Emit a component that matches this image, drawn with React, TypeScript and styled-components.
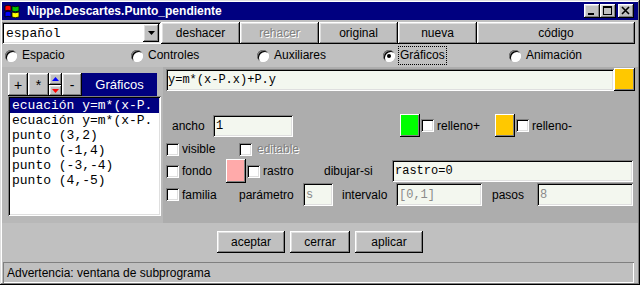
import React from 'react';
import styled, { createGlobalStyle, css } from 'styled-components';

const GlobalStyle = createGlobalStyle`
  html, body { margin: 0; padding: 0; background: #c0c0c0; }
  * { box-sizing: border-box; }
`;

const raised = css`
  box-shadow: inset -1px -1px #000, inset 1px 1px #fff, inset -2px -2px #808080, inset 2px 2px #dfdfdf;
`;
const sunken = css`
  box-shadow: inset 1px 1px #808080, inset -1px -1px #fff, inset 2px 2px #000, inset -2px -2px #dfdfdf;
`;

const Window = styled.div`
  width: 640px;
  height: 285px;
  background: #c0c0c0;
  padding: 2px;
  box-shadow: inset -1px -1px #000, inset 1px 1px #dfdfdf, inset -2px -2px #808080, inset 2px 2px #fff;
  display: flex;
  flex-direction: column;
  font-family: "Liberation Sans", Arial, sans-serif;
  font-size: 12px;
  color: #000;
  overflow: hidden;
`;

const TitleBar = styled.div`
  height: 18px;
  background: #000080;
  display: flex;
  align-items: center;
  padding: 0 4px 0 2px;
  flex: none;
`;

const TitleText = styled.span`
  color: #fff;
  font-weight: bold;
  font-size: 12px;
  margin-left: 7px;
  flex: 1;
  white-space: nowrap;
`;

const CaptionButton = styled.div<{ $gap?: number }>`
  width: 16px;
  height: 14px;
  background: #c0c0c0;
  ${raised};
  margin-left: ${p => p.$gap ?? 0}px;
  display: flex;
  align-items: center;
  justify-content: center;
  flex: none;
`;

const Toolbar = styled.div`
  margin-top: 2px;
  height: 22px;
  display: grid;
  grid-template-columns: 159px 79px 79px 79px 79px 158px;
  flex: none;
`;

const SelectBox = styled.div`
  background: #fff;
  ${sunken};
  display: flex;
  align-items: center;
  padding: 2px 2px 2px 4px;
  font-family: "Liberation Mono", "Courier New", monospace;
  font-size: 13px;
`;

const SelectText = styled.span`
  flex: 1;
`;

const SelectArrow = styled.div`
  width: 16px;
  height: 18px;
  background: #c0c0c0;
  ${raised};
  display: flex;
  align-items: center;
  justify-content: center;
`;

const Button = styled.div<{ $disabled?: boolean }>`
  background: #c0c0c0;
  ${raised};
  display: flex;
  align-items: center;
  justify-content: center;
  font-size: 12px;
  color: ${p => (p.$disabled ? '#808080' : '#000')};
  text-shadow: ${p => (p.$disabled ? '1px 1px #fff' : 'none')};
  white-space: nowrap;
`;

const RadioRow = styled.div`
  height: 23px;
  display: grid;
  grid-template-columns: repeat(5, 126px);
  padding-left: 3px;
  align-items: center;
  flex: none;
`;

const RadioItem = styled.div`
  display: flex;
  align-items: center;
  gap: 3px;
`;

const RadioCircle = styled.div<{ $checked?: boolean }>`
  width: 12px;
  height: 12px;
  border-radius: 50%;
  background: #fff;
  box-shadow: inset 1px 1px #808080, inset -1px -1px #fff, inset 2px 2px #000;
  border: 0;
  display: flex;
  align-items: center;
  justify-content: center;
  &::after {
    content: '';
    display: ${p => (p.$checked ? 'block' : 'none')};
    width: 4px;
    height: 4px;
    border-radius: 50%;
    background: #000;
  }
`;

const RadioLabel = styled.span<{ $focus?: boolean }>`
  padding: 1px 1px 2px 1px;
  border: 1px dotted ${p => (p.$focus ? '#000' : 'transparent')};
`;

const Main = styled.div`
  height: 156px;
  display: flex;
  flex: none;
`;

const LeftPanel = styled.div`
  width: 161px;
  background: #b8b8b8;
  padding: 6px 0 0 6px;
  display: flex;
  flex-direction: column;
  flex: none;
`;

const ListTools = styled.div`
  height: 23px;
  display: grid;
  grid-template-columns: 20px 21px 13px 20px 75px;
`;

const ToolButton = styled(Button)`
  font-size: 14px;
`;

const ArrowStack = styled.div`
  display: grid;
  grid-template-rows: 12px 11px;
`;

const ArrowBox = styled.div`
  background: #c0c0c0;
  ${raised};
  display: flex;
  align-items: center;
  justify-content: center;
`;

const ListTitle = styled.div`
  background: #000080;
  color: #fff;
  font-size: 13px;
  display: flex;
  align-items: center;
  justify-content: center;
`;

const List = styled.div`
  width: 153px;
  height: 120px;
  background: #fff;
  ${sunken};
  padding: 2px;
  overflow: hidden;
`;

const ListItem = styled.div<{ $selected?: boolean }>`
  height: 15px;
  line-height: 15px;
  padding-left: 2px;
  font-family: "Liberation Mono", "Courier New", monospace;
  font-size: 13px;
  white-space: nowrap;
  overflow: hidden;
  background: ${p => (p.$selected ? '#000080' : 'transparent')};
  color: ${p => (p.$selected ? '#fff' : '#000')};
`;

const RightPanel = styled.div`
  flex: 1;
  background: #adadad;
  padding: 0 0 0 3px;
  display: flex;
  flex-direction: column;
`;

const Row = styled.div<{ $mt?: number; $h: number }>`
  margin-top: ${p => p.$mt ?? 0}px;
  height: ${p => p.$h}px;
  display: flex;
  align-items: center;
  flex: none;
`;

const Cell = styled.span<{ $w?: number; $ml?: number; $disabled?: boolean }>`
  display: inline-flex;
  align-items: center;
  width: ${p => (p.$w ? `${p.$w}px` : 'auto')};
  margin-left: ${p => p.$ml ?? 0}px;
  flex: none;
  white-space: nowrap;
  font-size: 12px;
  color: ${p => (p.$disabled ? '#808080' : '#000')};
  text-shadow: ${p => (p.$disabled ? '1px 1px #fff' : 'none')};
`;

const Field = styled.div<{ $w: number; $h?: number; $ml?: number; $disabled?: boolean; $pl?: number }>`
  width: ${p => p.$w}px;
  height: ${p => p.$h ?? 22}px;
  margin-left: ${p => p.$ml ?? 0}px;
  flex: none;
  background: #f3f7ef;
  ${sunken};
  display: flex;
  align-items: center;
  padding-left: ${p => p.$pl ?? 3}px;
  font-family: "Liberation Mono", "Courier New", monospace;
  font-size: 12px;
  white-space: nowrap;
  overflow: hidden;
  color: ${p => (p.$disabled ? '#8a8a8a' : '#000')};
`;

const Swatch = styled.div<{ $color: string; $w?: number; $h?: number; $ml?: number }>`
  width: ${p => p.$w ?? 20}px;
  height: ${p => p.$h ?? 23}px;
  margin-left: ${p => p.$ml ?? 0}px;
  flex: none;
  background: ${p => p.$color};
  box-shadow: inset -1px -1px #000, inset 1px 1px #fff, inset -2px -2px #808080;
`;

const Check = styled.div<{ $ml?: number }>`
  width: 13px;
  height: 13px;
  margin-left: ${p => p.$ml ?? 0}px;
  flex: none;
  background: #fff;
  box-shadow: inset 1px 1px #808080, inset -1px -1px #fff, inset 2px 2px #000, inset -2px -2px #dfdfdf;
`;

const BottomBar = styled.div`
  height: 39px;
  display: flex;
  justify-content: center;
  align-items: flex-start;
  padding-top: 8px;
  gap: 5px;
  flex: none;
`;

const DialogButton = styled(Button)<{ $w: number }>`
  width: ${p => p.$w}px;
  height: 22px;
`;

const StatusBar = styled.div`
  height: 21px;
  margin: 0 4px 0 1px;
  box-shadow: inset 1px 1px #808080, inset -1px -1px #fff;
  display: flex;
  align-items: center;
  padding-left: 4px;
  font-size: 12px;
  flex: none;
`;

const AppIcon = () => (
  <svg width="16" height="16" viewBox="0 0 16 16">
    <rect x="0" y="0" width="16" height="16" fill="#000080" />
    <path d="M1 3 Q4 1.5 7 3 L7 8 Q4 6.5 1 8 Z" fill="#ff0000" stroke="#000" strokeWidth="0.8" />
    <path d="M8 3 Q11 4.5 15 3 L15 8 Q11 9.5 8 8 Z" fill="#00c000" stroke="#000" strokeWidth="0.8" />
    <path d="M1 9 Q4 7.5 7 9 L7 14 Q4 12.5 1 14 Z" fill="#0000ff" stroke="#000" strokeWidth="0.8" />
    <path d="M8 9 Q11 10.5 15 9 L15 14 Q11 15.5 8 14 Z" fill="#ffff00" stroke="#000" strokeWidth="0.8" />
  </svg>
);

const MinGlyph = () => (
  <svg width="16" height="14" viewBox="0 0 16 14">
    <rect x="4" y="9" width="6" height="2" fill="#000" />
  </svg>
);
const MaxGlyph = () => (
  <svg width="16" height="14" viewBox="0 0 16 14">
    <rect x="3.5" y="2.5" width="8" height="8" fill="none" stroke="#000" strokeWidth="1" />
    <rect x="3" y="2" width="9" height="2" fill="#000" />
  </svg>
);
const CloseGlyph = () => (
  <svg width="16" height="14" viewBox="0 0 16 14">
    <path d="M4 3 L11 10 M11 3 L4 10" stroke="#000" strokeWidth="1.6" />
  </svg>
);

const DownTriangle = ({ color = '#000', w = 7 }: { color?: string; w?: number }) => (
  <svg width={w} height={Math.ceil(w / 2) + 0} viewBox={`0 0 ${w} ${Math.ceil(w / 2)}`}>
    <path d={`M0 0 L${w} 0 L${w / 2} ${Math.ceil(w / 2)} Z`} fill={color} />
  </svg>
);
const UpTriangle = ({ color = '#000', w = 7 }: { color?: string; w?: number }) => (
  <svg width={w} height={Math.ceil(w / 2)} viewBox={`0 0 ${w} ${Math.ceil(w / 2)}`}>
    <path d={`M0 ${Math.ceil(w / 2)} L${w} ${Math.ceil(w / 2)} L${w / 2} 0 Z`} fill={color} />
  </svg>
);

const radios = [
  { label: 'Espacio' },
  { label: 'Controles' },
  { label: 'Auxiliares' },
  { label: 'Gráficos', checked: true },
  { label: 'Animación' },
];

const items = [
  'ecuación y=m*(x-P.',
  'ecuación y=m*(x-P.',
  'punto (3,2)',
  'punto (-1,4)',
  'punto (-3,-4)',
  'punto (4,-5)',
];

export default function App() {
  return (
    <>
      <GlobalStyle />
      <Window>
        <TitleBar>
          <AppIcon />
          <TitleText>Nippe.Descartes.Punto_pendiente</TitleText>
          <CaptionButton><MinGlyph /></CaptionButton>
          <CaptionButton><MaxGlyph /></CaptionButton>
          <CaptionButton $gap={2}><CloseGlyph /></CaptionButton>
        </TitleBar>

        <Toolbar>
          <SelectBox>
            <SelectText>español</SelectText>
            <SelectArrow><DownTriangle /></SelectArrow>
          </SelectBox>
          <Button>deshacer</Button>
          <Button $disabled>rehacer</Button>
          <Button>original</Button>
          <Button>nueva</Button>
          <Button>código</Button>
        </Toolbar>

        <RadioRow>
          {radios.map(r => (
            <RadioItem key={r.label}>
              <RadioCircle $checked={r.checked} />
              <RadioLabel $focus={r.checked}>{r.label}</RadioLabel>
            </RadioItem>
          ))}
        </RadioRow>

        <Main>
          <LeftPanel>
            <ListTools>
              <ToolButton>+</ToolButton>
              <ToolButton>*</ToolButton>
              <ArrowStack>
                <ArrowBox><UpTriangle color="#0000ff" /></ArrowBox>
                <ArrowBox><DownTriangle color="#ff0000" /></ArrowBox>
              </ArrowStack>
              <ToolButton>-</ToolButton>
              <ListTitle>Gráficos</ListTitle>
            </ListTools>
            <List>
              {items.map((t, i) => (
                <ListItem key={i} $selected={i === 0}>{t}</ListItem>
              ))}
            </List>
          </LeftPanel>

          <RightPanel>
            <Row $mt={1} $h={23}>
              <Field $w={448} $pl={2}>y=m*(x-P.x)+P.y</Field>
              <Swatch $color="#ffc800" $w={21} $ml={0} />
            </Row>

            <Row $mt={23} $h={23}>
              <Cell $w={41} $ml={6}>ancho</Cell>
              <Field $w={80} $h={22}>1</Field>
              <Swatch $color="#00ff00" $ml={107} />
              <Check $ml={1} />
              <Cell $w={58} $ml={3}>relleno+</Cell>
              <Swatch $color="#ffc800" />
              <Check $ml={1} />
              <Cell $ml={3}>relleno-</Cell>
            </Row>

            <Row $mt={1} $h={22}>
              <Check />
              <Cell $w={57} $ml={3}>visible</Cell>
              <Check />
              <Cell $ml={5} $disabled>editable</Cell>
            </Row>

            <Row $h={22}>
              <Check />
              <Cell $w={44} $ml={3}>fondo</Cell>
              <Swatch $color="#ffaaaa" $h={24} />
              <Check $ml={1} />
              <Cell $w={61} $ml={3}>rastro</Cell>
              <Cell $w={68}>dibujar-si</Cell>
              <Field $w={241}>rastro=0</Field>
            </Row>

            <Row $mt={1} $h={23}>
              <Check />
              <Cell $w={57} $ml={3}>familia</Cell>
              <Cell $w={64}>parámetro</Cell>
              <Field $w={30} $h={23} $disabled>s</Field>
              <Cell $w={54} $ml={9}>intervalo</Cell>
              <Field $w={86} $h={23} $disabled>[0,1]</Field>
              <Cell $w={45} $ml={10}>pasos</Cell>
              <Field $w={96} $h={23} $disabled>8</Field>
            </Row>
          </RightPanel>
        </Main>

        <BottomBar>
          <DialogButton $w={68}>aceptar</DialogButton>
          <DialogButton $w={60}>cerrar</DialogButton>
          <DialogButton $w={68}>aplicar</DialogButton>
        </BottomBar>

        <StatusBar>Advertencia: ventana de subprograma</StatusBar>
      </Window>
    </>
  );
}
